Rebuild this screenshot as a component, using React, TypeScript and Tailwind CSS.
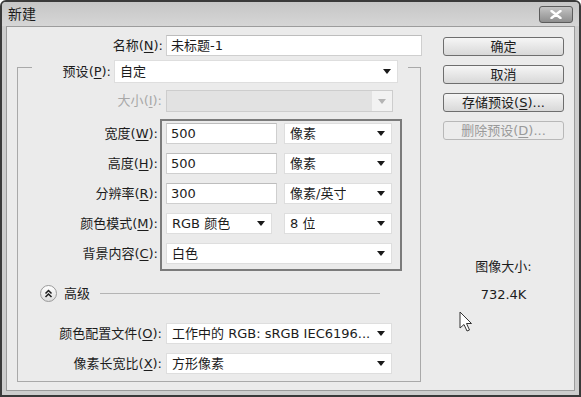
import React from "react";

const font = "font-['DejaVu_Sans','Noto_Sans_CJK_SC',sans-serif]";

const Label = ({ text, k, w, disabled }: { text: string; k: string; w: string; disabled?: boolean }) => (
  <div className={`${w} flex items-center justify-end text-[13px] ${disabled ? "text-[#a8a8a8]" : "text-[#1c1c1c]"}`}>
    {text}(<span className="underline underline-offset-2">{k}</span>):
  </div>
);

const Arrow = ({ light }: { light?: boolean }) => (
  <svg width="8" height="5" viewBox="0 0 8 5">
    <path d="M0 0 L8 0 L4 5 Z" fill={light ? "#b4b4b4" : "#1a1a1a"} />
  </svg>
);

const Select = ({ w, h = "h-[21px]", text, disabled }: { w: string; h?: string; text?: string; disabled?: boolean }) =>
  disabled ? (
    <div className={`${w} ${h} flex border border-[#cdcdcd] bg-[#e2e2e2]`}>
      <div className="flex-1" />
      <div className="w-[20px] bg-[#f2f2f2] flex items-center justify-center">
        <Arrow light />
      </div>
    </div>
  ) : (
    <div className={`${w} ${h} flex items-center justify-between bg-white border border-[#dedede] pl-[5px] pr-[6px] text-[13px] text-[#1c1c1c]`}>
      <span className="whitespace-nowrap overflow-hidden">{text}</span>
      <Arrow />
    </div>
  );

const Input = ({ w, text }: { w: string; text: string }) => (
  <div className={`${w} h-[21px] flex items-center bg-white border border-[#cfcfcf] border-t-[#bdbdbd] pl-[4px] text-[13px] text-[#1c1c1c]`}>
    {text}
  </div>
);

const Button = ({ children, disabled }: { children: React.ReactNode; disabled?: boolean }) => (
  <div
    className={`h-[19px] flex items-center justify-center rounded-[3px] border text-[13px] ${
      disabled
        ? "border-[#b8b8b8] bg-[#ececec] text-[#9a9a9a]"
        : "border-[#6e6e6e] bg-gradient-to-b from-[#f6f6f6] to-[#d8d8d8] text-[#1c1c1c]"
    }`}
  >
    {children}
  </div>
);

export default function App() {
  return (
    <div className={`${font} w-[581px] h-[397px] bg-white`}>
      <div className="relative w-[581px] h-[397px] flex flex-col border-2 border-[#3a3a3a] rounded-t-[6px] bg-[#cdcdcd] overflow-hidden">
        {/* title bar */}
        <div className="h-[24px] flex items-center justify-between pl-[6px] pr-[6px] bg-gradient-to-b from-[#c6c6c6] to-[#d6d6d6]">
          <span className="text-[14px] text-[#1c1c1c]">新建</span>
          <div className="w-[34px] h-[17px] rounded-[3px] border border-[#5c5c5c] bg-gradient-to-b from-[#c4c4c4] to-[#8e8e8e] flex items-center justify-center">
            <svg width="12" height="9" viewBox="0 0 12 9">
              <path d="M1.5 1 L10.5 8 M10.5 1 L1.5 8" stroke="#ffffff" strokeWidth="2.4" strokeLinecap="round" />
            </svg>
          </div>
        </div>

        {/* body */}
        <div className="flex-1 mx-[4px] mb-[4px] border border-[#9c9c9c] bg-[#ebebeb] flex">
          <div className="w-[420px] flex flex-col">
            <div className="mt-[8px] flex h-[21px]">
              <Label text="名称" k="N" w="w-[156px]" />
              <div className="ml-[3px]">
                <Input w="w-[256px]" text="未标题-1" />
              </div>
            </div>

            <div className="mt-[11px] ml-[10px] w-[404px] h-[315px] border border-[#a9a9a9] flex flex-col">
              <div className="-mt-[8px] ml-[14px] w-fit flex bg-[#ebebeb] pr-[10px] h-[23px]">
                <Label text="预设" k="P" w="w-[79px]" />
                <div className="ml-[3px]">
                  <Select w="w-[284px]" h="h-[23px]" text="自定" />
                </div>
              </div>

              <div className="mt-[7px] flex h-[22px]">
                <Label text="大小" k="I" w="w-[144px]" disabled />
                <div className="ml-[4px]">
                  <Select w="w-[227px]" h="h-[22px]" disabled />
                </div>
              </div>

              <div className="mt-[7px] flex">
                <div className="w-[140px] pt-[4px] flex flex-col gap-[9px]">
                  <Label text="宽度" k="W" w="w-full h-[21px]" />
                  <Label text="高度" k="H" w="w-full h-[21px]" />
                  <Label text="分辨率" k="R" w="w-full h-[21px]" />
                  <Label text="颜色模式" k="M" w="w-full h-[21px]" />
                  <Label text="背景内容" k="C" w="w-full h-[21px]" />
                </div>
                <div className="ml-[2px] w-[242px] border-2 border-[#7b7b7b] pt-[2px] pl-[4px] pb-[5px] flex flex-col gap-[9px]">
                  <div className="flex gap-[7px]">
                    <Input w="w-[111px]" text="500" />
                    <Select w="w-[108px]" text="像素" />
                  </div>
                  <div className="flex gap-[7px]">
                    <Input w="w-[111px]" text="500" />
                    <Select w="w-[108px]" text="像素" />
                  </div>
                  <div className="flex gap-[7px]">
                    <Input w="w-[111px]" text="300" />
                    <Select w="w-[108px]" text="像素/英寸" />
                  </div>
                  <div className="flex gap-[12px]">
                    <Select w="w-[106px]" text="RGB 颜色" />
                    <Select w="w-[108px]" text="8 位" />
                  </div>
                  <Select w="w-[226px]" text="白色" />
                </div>
              </div>

              <div className="mt-[14px] flex items-center h-[17px]">
                <div className="ml-[22px] w-[17px] h-[17px] rounded-full border border-[#9a9a9a] bg-gradient-to-b from-[#ffffff] to-[#dcdcdc] flex items-center justify-center">
                  <svg width="9" height="9" viewBox="0 0 9 9">
                    <path d="M1.5 4.5 L4.5 1.5 L7.5 4.5 M1.5 8 L4.5 5 L7.5 8" stroke="#1c1c1c" strokeWidth="1.5" fill="none" />
                  </svg>
                </div>
                <span className="ml-[7px] text-[13px] text-[#1c1c1c]">高级</span>
                <div className="ml-[10px] w-[280px] h-px bg-[#b4b4b4]" />
              </div>

              <div className="mt-[21px] flex h-[21px]">
                <Label text="颜色配置文件" k="O" w="w-[144px]" />
                <div className="ml-[4px]">
                  <Select w="w-[226px]" text="工作中的 RGB: sRGB IEC6196..." />
                </div>
              </div>
              <div className="mt-[9px] flex h-[21px]">
                <Label text="像素长宽比" k="X" w="w-[144px]" />
                <div className="ml-[4px]">
                  <Select w="w-[226px]" text="方形像素" />
                </div>
              </div>
            </div>
          </div>

          <div className="ml-[16px] w-[121px] flex flex-col">
            <div className="mt-[10px] flex flex-col gap-[9px]">
              <Button>确定</Button>
              <Button>取消</Button>
              <Button>
                存储预设(<span className="underline underline-offset-2">S</span>)...
              </Button>
              <Button disabled>
                删除预设(<span className="underline underline-offset-2">D</span>)...
              </Button>
            </div>
            <div className="mt-[117px] text-center text-[13px] text-[#1c1c1c]">图像大小:</div>
            <div className="mt-[8px] text-center text-[13px] text-[#1c1c1c]">732.4K</div>
          </div>
        </div>

        {/* mouse cursor */}
        <svg className="absolute left-[457px] top-[309px]" width="14" height="22" viewBox="0 0 14 22">
          <path d="M1 1 L1 17 L5 13.5 L8 20 L10.5 19 L7.5 12.5 L12.5 12.5 Z" fill="#ffffff" stroke="#333333" strokeWidth="1" strokeLinejoin="round" />
        </svg>
      </div>
    </div>
  );
}
